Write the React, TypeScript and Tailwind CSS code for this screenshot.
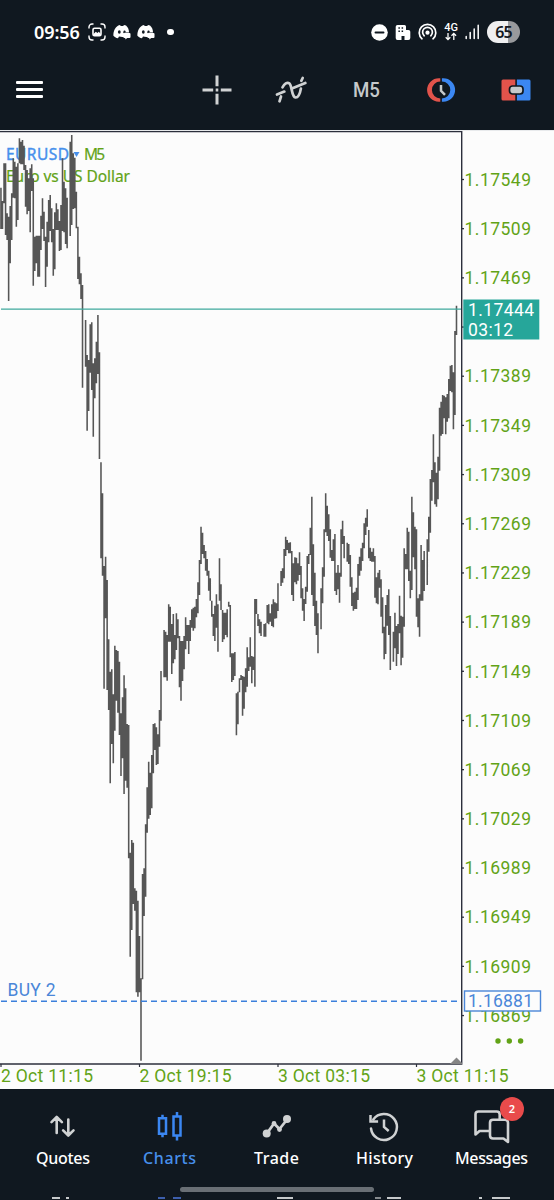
import React from 'react';

type Bar = [number, number, number];

// Each run of bars has its own origin, values are thirds of a pixel: [x, high, low]
const RUNS: { x: number; y: number; bars: Bar[] }[] = [
  {
    x: 0,
    y: 125,
    bars: [
      [4, 188, 312], [8, 228, 312], [12, 115, 235], [17, 115, 330], [21, 265, 345], [26, 275, 528], [30, 243, 415], [35, 205, 345],
      [40, 100, 218], [45, 110, 220], [49, 125, 305], [54, 115, 285], [58, 40, 115], [63, 50, 118], [67, 45, 118], [72, 62, 135],
      [77, 120, 245], [81, 135, 268], [86, 160, 258], [91, 130, 322], [95, 118, 198], [100, 160, 482], [104, 335, 438], [109, 332, 415],
      [113, 332, 455], [118, 332, 455], [123, 272, 375], [127, 220, 312], [132, 260, 348], [137, 335, 486], [141, 290, 425], [146, 225, 352],
      [151, 210, 318], [155, 250, 352], [160, 312, 452], [165, 262, 433], [169, 235, 315], [174, 253, 315], [178, 288, 378], [183, 240, 375],
      [188, 100, 318], [192, 170, 322], [197, 190, 357], [201, 218, 370], [211, 50, 333], [215, 30, 300], [220, 85, 252], [224, 98, 250],
      [229, 200, 310], [234, 305, 462], [238, 395, 478], [243, 445, 522], [248, 480, 788], [257, 585, 725], [261, 690, 917], [266, 705, 858],
      [271, 598, 743], [275, 592, 795], [280, 715, 935], [285, 700, 820], [289, 650, 775], [294, 570, 747], [298, 682, 1002],
    ],
  },
  {
    x: 60,
    y: 360,
    bars: [
      [123, 307, 595], [128, 400, 647], [132, 618, 986], [137, 590, 775], [141, 660, 990], [146, 838, 1050], [151, 935, 1270], [155, 928, 1152],
      [160, 1003, 1210], [165, 857, 1112], [169, 870, 1022], [174, 873, 1058], [179, 905, 1125], [183, 1060, 1248], [188, 1012, 1195], [193, 946, 1302],
      [197, 985, 1262], [312, 810, 952], [317, 815, 952], [321, 825, 962], [326, 733, 845], [331, 740, 845], [335, 792, 942], [340, 762, 910],
      [345, 825, 898], [349, 760, 870], [354, 778, 835], [359, 828, 982], [363, 843, 1022], [368, 843, 963], [373, 828, 928], [377, 772, 868],
      [382, 795, 843], [386, 795, 882], [391, 780, 843], [396, 748, 803], [400, 743, 812], [405, 740, 805], [410, 717, 772], [414, 667, 760],
      [419, 600, 705], [423, 500, 612], [428, 518, 582], [433, 555, 595], [437, 573, 632], [442, 597, 647], [447, 632, 692], [451, 655, 722],
      [456, 722, 770], [460, 762, 828], [465, 737, 843], [469, 703, 803], [474, 733, 875],
    ],
  },
  {
    x: 90,
    y: 700,
    bars: [
      [111, 72, 263], [116, 75, 475], [121, 458, 770], [125, 420, 690], [130, 428, 612], [135, 565, 632], [139, 572, 877], [144, 602, 890],
      [148, 708, 877], [153, 835, 1082], [157, 522, 838], [162, 505, 648], [167, 373, 590], [171, 262, 398], [176, 185, 356], [181, 218, 345],
      [185, 165, 325], [190, 72, 220], [194, 70, 150], [199, 82, 195], [204, 103, 192], [208, 30, 140], [213, -87, 62],
    ],
  },
  {
    x: 190,
    y: 480,
    bars: [
      [88, 235, 362], [93, 313, 390], [98, 390, 486], [103, 398, 478], [107, 398, 465], [112, 388, 472], [117, 365, 380], [121, 375, 532],
      [126, 520, 606], [131, 520, 600], [135, 516, 588], [139, 640, 766], [144, 635, 733], [149, 595, 637], [153, 585, 600], [158, 588, 707],
      [163, 590, 686], [167, 565, 637], [172, 502, 620], [177, 532, 573], [181, 472, 560], [186, 528, 610], [191, 530, 570], [195, 357, 620],
      [199, 357, 402], [204, 402, 438], [209, 418, 460], [213, 425, 468], [222, 432, 470], [227, 430, 470], [232, 375, 430], [236, 373, 433],
      [241, 400, 425], [246, 373, 438], [250, 358, 442], [255, 367, 416], [260, 370, 415], [264, 310, 393], [273, 273, 318], [278, 265, 308],
      [283, 207, 295], [287, 170, 228], [292, 180, 210], [296, 188, 220], [301, 187, 220], [306, 213, 345], [310, 250, 363], [315, 232, 307],
      [319, 233, 313], [324, 250, 302], [329, 217, 285], [333, 258, 355], [338, 325, 392], [343, 357, 423], [347, 320, 372], [352, 228, 335],
      [356, 222, 252], [361, 143, 225], [366, 50, 345], [370, 193, 378], [375, 278, 438], [380, 362, 465], [384, 400, 520], [393, 325, 448],
      [398, 262, 370], [403, 148, 290],
    ],
  },
  {
    x: 320,
    y: 480,
    bars: [
      [17, 40, 157], [22, 77, 168], [26, 103, 183], [31, 148, 233], [36, 210, 243], [40, 178, 243], [45, 162, 333], [50, 278, 345],
      [54, 255, 328], [59, 278, 368], [63, 148, 290], [68, 122, 192], [73, 168, 235], [82, 188, 245], [86, 192, 252], [91, 225, 320],
      [96, 292, 378], [100, 338, 392], [105, 335, 387], [110, 323, 387], [114, 252, 360], [119, 230, 287], [124, 205, 272], [128, 188, 243],
      [133, 130, 205], [137, 113, 165], [142, 88, 140], [147, 150, 235], [151, 203, 243], [156, 215, 245], [160, 205, 245], [165, 228, 353],
      [170, 292, 370], [174, 278, 373], [179, 270, 323], [184, 298, 410], [188, 352, 460], [193, 440, 538], [197, 375, 522], [202, 345, 437],
      [207, 328, 465], [211, 408, 570], [221, 455, 545], [225, 398, 505], [230, 438, 558], [234, 432, 522], [239, 347, 460], [244, 407, 556],
      [248, 410, 533], [253, 205, 440], [257, 222, 268], [262, 143, 268], [267, 155, 303], [271, 272, 355], [276, 50, 330], [281, 97, 232],
      [285, 140, 268], [290, 148, 410], [294, 355, 442], [299, 343, 470], [304, 195, 362], [308, 240, 362], [313, 213, 333], [322, 178, 315],
    ],
  },
  {
    x: 400,
    y: 290,
    bars: [
      [87, 680, 785], [92, 567, 728], [96, 540, 632], [101, 433, 577], [105, 517, 643], [110, 548, 650], [114, 500, 628], [119, 353, 542],
      [124, 335, 437], [128, 315, 432], [133, 317, 385], [137, 322, 433], [142, 312, 395], [147, 267, 385], [151, 227, 303], [156, 225, 307],
      [161, 247, 418], [165, 123, 375], [170, 47, 135],
    ],
  },
];

const STEP = 1.539;
const CHART_TOP = 130;

const BARS_PATH = RUNS.flatMap((run) =>
  run.bars.map(([x, high, low]) => {
    const slot = Math.round((run.x + x / 3 - 0.95) / STEP);
    const px = (0.95 + slot * STEP).toFixed(2);
    return `M${px} ${(run.y + high / 3).toFixed(1)}V${(run.y + low / 3).toFixed(1)}`;
  })
).join('');

const PRICES = Array.from({ length: 18 }, (_, i) => ({
  label: ((117549 - i * 40) / 100000).toFixed(5),
  y: 179.5 + i * 49.18,
}));

const TIMES = [
  { label: '2 Oct 11:15', x: 1 },
  { label: '2 Oct 19:15', x: 139.5 },
  { label: '3 Oct 03:15', x: 278 },
  { label: '3 Oct 11:15', x: 416.5 },
];

const UI_FONT = "font-['Noto_Sans',sans-serif]";

function StatusBar() {
  return (
    <div className="flex h-16 items-center pl-[34px] text-white">
      <span className="w-[54px] whitespace-nowrap text-[18px] font-semibold tracking-[-0.1px]">09:56</span>
      <svg width="18" height="18" viewBox="0 0 18 18" fill="none" stroke="white" strokeWidth="1.4">
        <path d="M1 5.5V4a3 3 0 0 1 3-3h1.5M12.5 1H14a3 3 0 0 1 3 3v1.500M17 12.500V14a3 3 0 0 1-3 3h-1.500M5.500 17H4a3 3 0 0 1-3-3v-1.500" />
        <rect x="5" y="5.300" width="8" height="7.400" rx="1.500" strokeWidth="1.600" />
        <path d="M5.500 11l2.300-2.200 1.600 1.200 1.400-1.200 2 2.200v1.200H5.500z" fill="white" stroke="none" />
      </svg>
      <Discord className="ml-[7px]" />
      <Discord className="ml-[6px]" />
      <span className="ml-[12px] size-[6.500px] rounded-full bg-white" />

      <div className="ml-auto flex items-center pr-[34px]">
        <svg width="17" height="17" viewBox="0 0 17 17">
          <circle cx="8.500" cy="8.500" r="8.300" fill="white" />
          <path d="M4.500 8.500h8" stroke="#101820" strokeWidth="1.900" strokeLinecap="round" />
        </svg>
        <svg className="ml-[7px]" width="16" height="17" viewBox="0 0 16 17">
          <path d="M2.500 1h7Q11 1 11 2.500V6h2.500Q15.300 6 15.300 7.800V14q0 2-2 2H9.500v-4h-3v4H2.500Q.7 16 .7 14V2.800Q.7 1 2.500 1z" fill="white" />
          <path d="M3.400 4h1.500M6.600 4h1.500M3.400 7.300h1.500M6.600 7.300h1.500" stroke="#101820" strokeWidth="1.500" />
        </svg>
        <svg className="ml-[7px]" width="19" height="18" viewBox="0 0 19 18" fill="none" stroke="white" strokeWidth="1.700" strokeLinecap="round">
          <path d="M4 15.800A8.300 8.300 0 1 1 15 15.800" />
          <path d="M6.200 12.800A4.900 4.900 0 1 1 12.800 12.800" />
          <circle cx="9.500" cy="9.700" r="2.100" fill="white" stroke="none" />
        </svg>
        <span className="ml-[7px] flex w-[14px] flex-col items-center">
          <span className="font-['Roboto',sans-serif] text-[11px] font-medium leading-[9px]">4G</span>
          <svg width="12" height="9" viewBox="0 0 12 9" fill="none" stroke="white" strokeWidth="1.300">
            <path d="M3 1v6.500M.7 5.300L3 7.600l2.300-2.300M8.800 8V1.500M6.500 3.700l2.300-2.300 2.300 2.300" />
          </svg>
        </span>
        <svg className="ml-[7px]" width="15" height="16" viewBox="0 0 15 16" stroke="white" strokeWidth="1.500" strokeLinecap="round">
          <path d="M1.200 14.500v-2M5.200 14.500V8.500M9.200 14.500V5M13.200 14.500V1.200" />
        </svg>
        <span className="ml-[7px] flex h-[22px] w-[33px] items-center justify-center overflow-hidden rounded-full bg-linear-to-r from-[#efeff0] from-65% to-[#98999c] to-65% text-[16px] font-semibold tracking-[-1px] text-[#14181e]">
          65
        </span>
      </div>
    </div>
  );
}

function Discord({ className }: { className: string }) {
  return (
    <svg className={className} width="18" height="16" viewBox="0 0 18 16">
      <path d="M5.300 1.500L7 1l.7 1h2.500l.8-1 2 .6c2 1.700 3 4.200 3 7H11v4.600L6 12.500l-1 1.800C3 14 1.300 13 .4 11.800.3 7.800 1.500 4 5.300 1.500z" fill="white" />
      <ellipse cx="6.300" cy="8" rx="1.400" ry="1.700" fill="#101820" />
      <path d="M10.300 9.200V8q.3-1.700 1.500-1.400 1 .3.900 1.600" fill="#101820" />
      <path d="M11.500 9h5q1 0 1 1v3q0 1-1 1h-2.200l-2 1.600V14h-.8q-1 0-1-1v-3q0-1 1-1z" fill="white" />
    </svg>
  );
}

function Toolbar() {
  return (
    <div className="flex h-[52px] items-center pl-4">
      <button className="mb-[1px] flex w-[27px] flex-col gap-1">
        <span className="h-[3px] rounded-[1px] bg-white" />
        <span className="h-[3px] rounded-[1px] bg-white" />
        <span className="h-[3px] rounded-[1px] bg-white" />
      </button>
      <svg className="ml-[159px]" width="30" height="30" viewBox="0 0 30 30" stroke="#d0d2d3" strokeWidth="3">
        <path d="M15 .5v10.700M15 18.800v10.700M.5 15h10.700M18.800 15h10.700M13.700 15h2.600" />
      </svg>
      <svg className="ml-[43px]" width="32" height="28" viewBox="0 0 32 28" fill="none" stroke="#d0d2d3" strokeWidth="2.700" strokeLinecap="round">
        <path d="M2 18.500L9.300 15.600M17.500 12.300L30.300 7" />
        <path d="M4.500 25.300L6 20.500M7.500 11.300c2-3.500 4.600-5.500 6.800-4 3 2.200 2 13.500 6.200 14.200 3 .3 4.600-4.500 5.400-9M26.300 4.800L27.700 2" />
      </svg>
      <svg className="ml-[46px] font-['Roboto',sans-serif]" width="27" height="24" fontSize="21" fontWeight="500">
        <text x="0" y="19" textLength="27" lengthAdjust="spacingAndGlyphs" fill="#c6c9cb">M5</text>
      </svg>
      <svg className="ml-[46px]" width="30" height="26" viewBox="0 0 30 26">
        <path d="M14.300 1.300v3.300a8 8 0 0 0 0 16.800v3.300h-1.500A11.700 11.700 0 0 1 12.800 1.300z" fill="#e2534b" />
        <path d="M15.900 1.300v3.300a8 8 0 0 1 0 16.800v3.300h1.500A11.700 11.700 0 0 0 17.400 1.300z" fill="#3b87f2" />
        <path d="M15 8v5.800l4 4" fill="none" stroke="#c6c9cb" strokeWidth="2.500" />
      </svg>
      <svg className="ml-[45px]" width="30" height="22" viewBox="0 0 30 22">
        <path d="M2 .5h12.300v21H2q-1.500 0-1.500-1.500V2Q.5.5 2 .5z" fill="#e2534b" />
        <path d="M15.900.5H28q1.500 0 1.500 1.500v18q0 1.500-1.500 1.500H15.900z" fill="#3b87f2" />
        <rect x="8.500" y="7" width="13.500" height="8" rx="3" fill="#c6c9cb" stroke="#101820" strokeWidth="1.700" />
      </svg>
    </div>
  );
}

function PriceChart() {
  return (
    <svg
      className="block bg-[#fcfcfc] font-['Roboto',sans-serif]"
      width="554"
      height="959"
      viewBox={`0 ${CHART_TOP} 554 959`}
      fontSize="17.500"
    >
      <path d="M0 130.500H554" stroke="#e8eaec" />
      <path d="M0 131.600H461.700V1064H0" fill="none" stroke="#2c2f3c" strokeWidth="1.400" />

      <g className="font-['Noto_Sans',sans-serif]" fontSize="15.500">
        <text x="6" y="160" fill="#4790ec" stroke="#4790ec" strokeWidth=".4" textLength="63">EURUSD</text>
        <path d="M73.500 152h6l-3 5z" fill="#4790ec" />
        <text x="84" y="160" fill="#62a317" stroke="#62a317" strokeWidth=".2" textLength="21">M5</text>
        <text x="6" y="182" fill="#62a317" stroke="#62a317" strokeWidth=".2" textLength="124">Euro vs US Dollar</text>
      </g>

      <path d={BARS_PATH} stroke="#565656" strokeWidth="1.560" fill="none" />

      {/* current bid */}
      <path d="M1 309.200H461" stroke="#3fa99d" strokeWidth="1.200" />

      {PRICES.map(({ label, y }) => (
        <g key={label}>
          <path d={`M461 ${y}h3`} stroke="#2c2f3c" strokeWidth="1.300" />
          {label !== '1.17429' && (
            <text x="464.500" y={y + 6.200} fill="#62a317" textLength="66.500">{label}</text>
          )}
        </g>
      ))}

      <rect x="463.300" y="299.500" width="76" height="40" fill="#26a69a" />
      <g fill="white">
        <text x="468" y="316" textLength="66">1.17444</text>
        <text x="468" y="335.500" textLength="45">03:12</text>
      </g>

      {/* open position */}
      <text x="7.500" y="996" fill="#4a86d8" textLength="48">BUY 2</text>
      <path d="M1 1001.200H461" stroke="#3b7fdb" strokeWidth="1.400" strokeDasharray="6 4" />
      <rect x="464.500" y="991" width="76" height="20" fill="#fcfcfc" stroke="#4a86d8" strokeWidth="1.400" />
      <text x="468" y="1007" fill="#4a86d8" textLength="65">1.16881</text>

      <g fill="#62a317">
        <circle cx="498" cy="1041" r="2.700" />
        <circle cx="509.300" cy="1041" r="2.700" />
        <circle cx="520.600" cy="1041" r="2.700" />
      </g>
      <path d="M450 1064l6.500-6.500 5.500 5.500v1z" fill="#858585" />

      {TIMES.map(({ label, x }) => (
        <g key={label}>
          <path d={`M${x} 1064v3`} stroke="#2c2f3c" strokeWidth="1.200" />
          <text x={x} y="1082" fill="#62a317" textLength="92">{label}</text>
        </g>
      ))}
    </svg>
  );
}

const TABS = [
  {
    label: 'Quotes',
    width: 54,
    icon: (
      <path d="M11.700 26V10.500M6.500 15.200l5.200-5.200 5.200 5.200M23.300 12.500V28M18.100 23.300l5.200 5.200 5.200-5.200" strokeWidth="2.600" strokeLinecap="round" strokeLinejoin="round" />
    ),
  },
  {
    label: 'Charts',
    width: 53,
    icon: (
      <path d="M10.500 7.700V11M10.500 27v3.300M25 5v4M25 29v4.500M7 11.300h7v15.400H7zM21.500 9.500h7v19h-7z" strokeWidth="2.500" />
    ),
  },
  {
    label: 'Trade',
    width: 45,
    icon: (
      <>
        <path d="M7.500 27L15 16.500l5.500 5.500 8-10" strokeWidth="2.800" strokeLinejoin="round" />
        <circle cx="7.700" cy="26.500" r="4" fill="currentColor" stroke="none" />
        <circle cx="28" cy="12" r="4" fill="currentColor" stroke="none" />
        <circle cx="15" cy="16.500" r="2.400" fill="currentColor" stroke="none" />
        <circle cx="20.500" cy="22.500" r="2.400" fill="currentColor" stroke="none" />
      </>
    ),
  },
  {
    label: 'History',
    width: 57,
    icon: (
      <>
        <path d="M5 21.500A13 13 0 1 0 7.300 12.500" strokeWidth="2.500" strokeLinecap="round" />
        <path d="M4.500 8v6.600h7.600M18 12.500v7.500l4.700 4" strokeWidth="2.500" />
      </>
    ),
  },
  {
    label: 'Messages',
    width: 73,
    icon: (
      <>
        <path d="M26.700 12V7.500q0-3-3-3H5.500q-3 0-3 3V27.500l4-3.500H17" strokeWidth="2.600" strokeLinejoin="round" />
        <path d="M20 12.800h12q3 0 3 3V35l-4.500-3.500H20q-3 0-3-3V15.800q0-3 3-3z" strokeWidth="2.600" strokeLinejoin="round" />
      </>
    ),
  },
];

function BottomNav() {
  return (
    <nav className="flex h-[111px] flex-col bg-[#101820]">
      <div className="grid h-[98px] grid-cols-5 px-[9px] pt-[18px]">
        {TABS.map(({ label, icon, width }) => {
          const active = label === 'Charts';
          return (
            <button key={label} className={`relative flex flex-col items-center ${active ? 'text-[#3b87f2]' : 'text-[#d0d2d3]'}`}>
              <svg className="overflow-visible" width="38" height="38" viewBox="0 0 36 38" fill="none" stroke="currentColor">
                {icon}
              </svg>
              {/* SVG text keeps every label at its own width */}
              <svg width={width} height="24" className="mt-[1px] overflow-visible" fontSize="16" fontWeight="500">
                <text x="0" y="18" textLength={width} fill={active ? '#4790ec' : 'white'}>{label}</text>
              </svg>
              {label === 'Messages' && (
                <span className="absolute left-[62px] -top-[10px] flex size-6 items-center justify-center rounded-full bg-[#e94b4b] text-[11px] font-semibold text-white">
                  2
                </span>
              )}
            </button>
          );
        })}
      </div>
      <div className="mx-auto h-[5px] w-[194px] rounded-full bg-[#696f75]" />
      <div className="mt-auto flex h-[3px] items-start pl-[52px]">
        <span className="h-[2px] w-2 bg-[#c6c9cb]" />
        <span className="ml-[6px] h-[2px] w-[3px] bg-[#c6c9cb]" />
        <span className="ml-[89px] h-[2px] w-[7px] bg-[#3d5fae]" />
        <span className="ml-[8px] h-[2px] w-2 bg-[#3d5fae]" />
        <span className="ml-[96px] h-[2px] w-4 bg-[#c6c9cb]" />
        <span className="ml-[82px] h-[2px] w-[6px] bg-[#85898d]" />
        <span className="ml-[6px] h-[2px] w-[14px] bg-[#c6c9cb]" />
        <span className="ml-[78px] h-[2px] w-[3px] bg-[#c6c9cb]" />
        <span className="ml-[10px] h-[2px] w-[18px] bg-[#c6c9cb]" />
      </div>
    </nav>
  );
}

export default function App() {
  return (
    <div className={`h-[1200px] w-[554px] overflow-hidden bg-[#101820] ${UI_FONT}`}>
      <header className="h-[130px] bg-[#101820]">
        <StatusBar />
        <Toolbar />
      </header>
      <PriceChart />
      <BottomNav />
    </div>
  );
}
